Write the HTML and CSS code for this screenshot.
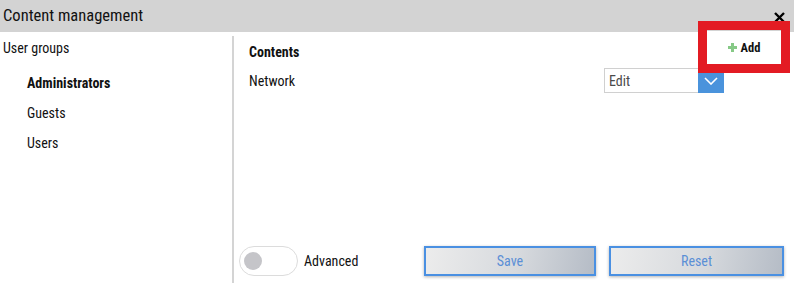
FILE: index.html
```html
<!DOCTYPE html>
<html lang="en">
<head>
<meta charset="utf-8">
<title>Content management</title>
<link rel="stylesheet" href="styles.css">
</head>
<body>
<div class="dialog">
  <header class="titlebar">
    <span class="title">Content management</span>
    <button class="close" aria-label="Close">
      <svg width="11" height="11" viewBox="0 0 11 11"><path d="M1 1L10 10M10 1L1 10" stroke="#000" stroke-width="2.4" fill="none"/></svg>
    </button>
  </header>
  <main class="body">
    <aside class="groups">
      <div class="groups-title">User groups</div>
      <ul class="group-list">
        <li class="group active">Administrators</li>
        <li class="group">Guests</li>
        <li class="group">Users</li>
      </ul>
    </aside>
    <div class="divider"></div>
    <section class="contents">
      <div class="contents-head">
        <h2 class="contents-title">Contents</h2>
        <button class="add-btn">
          <svg width="9" height="9" viewBox="0 0 9 9"><path d="M4.5 0V9M0 4.5H9" stroke="#86c986" stroke-width="3" fill="none"/></svg>
          <span>Add</span>
        </button>
      </div>
      <div class="content-row">
        <span class="content-name">Network</span>
        <div class="select">
          <span class="select-value">Edit</span>
          <span class="select-arrow">
            <svg width="14" height="8" viewBox="0 0 14 8"><path d="M1 1L7 7L13 1" stroke="#fff" stroke-width="1.6" fill="none"/></svg>
          </span>
        </div>
      </div>
      <div class="footer">
        <label class="toggle-wrap">
          <span class="toggle"><span class="knob"></span></span>
          <span class="toggle-label">Advanced</span>
        </label>
        <button class="action save">Save</button>
        <button class="action reset">Reset</button>
      </div>
    </section>
  </main>
</div>
</body>
</html>
```

FILE: styles.css
```css
* { box-sizing: border-box; }
html, body { margin: 0; padding: 0; background: #fff; }
body {
  width: 794px;
  height: 283px;
  overflow: hidden;
  font-family: Roboto, "Liberation Sans", sans-serif;
  font-stretch: 87.5%;
  font-size: 14px;
  line-height: 16px;
  color: #111;
}
.dialog { display: flex; flex-direction: column; height: 283px; }
.titlebar {
  height: 32px;
  flex: none;
  background: #d3d3d3;
  display: flex;
  align-items: flex-start;
  justify-content: space-between;
  padding: 0 9px 0 3px;
}
.title { font-size: 16.5px; line-height: 19px; margin-top: 6px; color: #111; }
.close {
  border: 0; background: none; padding: 0; margin-top: 12px;
  width: 11px; height: 11px; display: block;
}
.close svg { display: block; }
.body { flex: 1; display: flex; min-height: 0; }
.groups { width: 232px; flex: none; padding: 8px 0 0 3px; }
.groups-title { height: 16px; }
.group-list { list-style: none; margin: 19px 0 0; padding: 0 0 0 24px; display: flex; flex-direction: column; gap: 14px; }
.group { height: 16px; }
.group.active { font-weight: 700; }
.divider { width: 2px; flex: none; background: #d4d4d4; margin-top: 4px; }
.contents { flex: 1; display: flex; flex-direction: column; padding: 0 10px 7px 5px; }
.contents-head { display: flex; justify-content: space-between; align-items: flex-start; padding: 0 3px 0 10px; }
.contents-title { margin: 12px 0 0; font-size: 14px; line-height: 16px; font-weight: 700; }
.add-btn {
  position: relative;
  margin-top: -1px;
  width: 74px; height: 33px;
  background: #fff; border: 0; padding: 0 0 0 0;
  display: flex; align-items: center; justify-content: center; gap: 4px;
  font-family: inherit; font-stretch: 87.5%; font-size: 12.5px; font-weight: 700; color: #111;
}
.add-btn svg { display: block; margin-top: -1px; }
.add-btn::after {
  content: "";
  position: absolute;
  top: -10px; left: -9px; right: -9px; bottom: -9px;
  border: 9px solid #e31b23;
  pointer-events: none;
}
.content-row { display: flex; align-items: center; margin-top: 4px; padding-left: 10px; }
.content-name { width: 355px; flex: none; }
.select { display: flex; height: 25px; width: 120px; }
.select-value {
  flex: 1; border: 1px solid #d0d0d0; border-right: 0;
  padding-left: 4px; display: flex; align-items: center; color: #4a4a4a;
}
.select-arrow { width: 26px; background: #4a93dc; display: flex; align-items: center; justify-content: center; }
.select-arrow svg { display: block; }
.footer { margin-top: auto; display: flex; align-items: center; height: 30px; }
.toggle-wrap { display: flex; align-items: center; gap: 6px; }
.toggle {
  width: 59px; height: 30px; border-radius: 15px;
  border: 1px solid #dcdcdc; background: #fff;
  display: flex; align-items: center; padding-left: 4px;
}
.knob { width: 18px; height: 18px; border-radius: 50%; background: #c5c5c9; }
.toggle-label { color: #111; }
.action {
  height: 30px;
  border: 2px solid #4a90e2;
  background: linear-gradient(100deg, #ececec 0%, #d6d9dd 55%, #b5bcc6 100%);
  box-shadow: 0 1px 3px rgba(0,0,0,0.3);
  color: #5b8fd6;
  font-family: inherit; font-stretch: 87.5%; font-size: 14px;
}
.save { width: 172px; margin-left: auto; }
.reset { width: 175px; margin-left: 13px; }
```
